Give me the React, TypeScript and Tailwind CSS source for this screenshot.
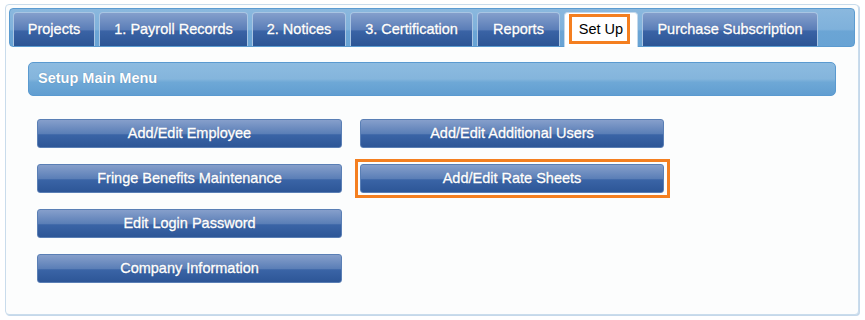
import React from "react";

const tabs = [
  { label: "Projects", w: 82 },
  { label: "1. Payroll Records", w: 149 },
  { label: "2. Notices", w: 94 },
  { label: "3. Certification", w: 123 },
  { label: "Reports", w: 83 },
  { label: "Set Up", w: 74, active: true },
  { label: "Purchase Subscription", w: 176 },
];

function Btn({ label, hl }: { label: string; hl?: boolean }) {
  return (
    <div className="relative">
      <div className="h-[29px] rounded-[3px] border border-[#5a7fb5] bg-[linear-gradient(#869fcb,#5b7fb7_50%,#3a64a6_55%,#2d5697)] flex items-center justify-center text-white text-[14.5px] [-webkit-text-stroke:0.35px_white] [text-shadow:0_0_1px_rgba(20,40,90,0.7)]">
        {label}
      </div>
      {hl && <div className="absolute -left-[5px] -right-[6px] -top-[5px] -bottom-[5px] border-[3px] border-[#f47f20]" />}
    </div>
  );
}

export default function App() {
  return (
    <div className="w-[865px] h-[320px] bg-white pt-[4px] pl-[5px] font-['Liberation_Sans',Arial,sans-serif]">
      <div className="w-[854px] h-[311px] rounded-[4px] border border-[#c9dcec] shadow-[1px_1px_0_#c5d8ea] bg-[#fcfdfd] p-[3px]">
        <div className="h-[39px] rounded-[4px] border border-[#5b9bd0] bg-[linear-gradient(#8ab8de,#7fb1db_55%,#6ba5d5_60%,#68a3d4)] flex items-end pl-[3px] gap-[4px]">
          {tabs.map((t) =>
            t.active ? (
              <div
                key={t.label}
                style={{ width: t.w }}
                className="relative h-[35px] -mb-[1px] rounded-t-[4px] border border-b-0 border-[#c4d9ec] bg-white flex items-center justify-center text-black text-[14.5px]"
              >
                <span>{t.label}</span>
                <div className="absolute left-[4px] right-[7px] top-[1px] bottom-[3px] border-[3px] border-[#f47f20]" />
              </div>
            ) : (
              <div
                key={t.label}
                style={{ width: t.w }}
                className="h-[34px] rounded-t-[4px] border border-b-0 border-[#a9c5e3] bg-[linear-gradient(#849fcc,#5b7eb8_50%,#3a63a5_55%,#2c5595)] flex items-center justify-center text-white text-[14.5px] [-webkit-text-stroke:0.35px_white] [text-shadow:0_0_1px_rgba(20,40,90,0.7)]"
              >
                <span>{t.label}</span>
              </div>
            )
          )}
        </div>
        <div className="px-[19px] pt-[15px]">
          <div className="h-[34px] rounded-[5px] border border-[#5a9ad0] bg-[linear-gradient(#8dbbe0,#84b5dc_50%,#6ea8d6_60%,#619ed1)] flex items-center pl-[9px] text-white font-bold text-[14.5px] [text-shadow:0_0_1px_rgba(30,70,120,0.5)]">
            Setup Main Menu
          </div>
          <div className="pl-[9px] pt-[23px] flex gap-[18px]">
            <div className="w-[305px] flex flex-col gap-[16px]">
              <Btn label="Add/Edit Employee" />
              <Btn label="Fringe Benefits Maintenance" />
              <Btn label="Edit Login Password" />
              <Btn label="Company Information" />
            </div>
            <div className="w-[304px] flex flex-col gap-[16px]">
              <Btn label="Add/Edit Additional Users" />
              <Btn label="Add/Edit Rate Sheets" hl />
            </div>
          </div>
        </div>
      </div>
    </div>
  );
}
